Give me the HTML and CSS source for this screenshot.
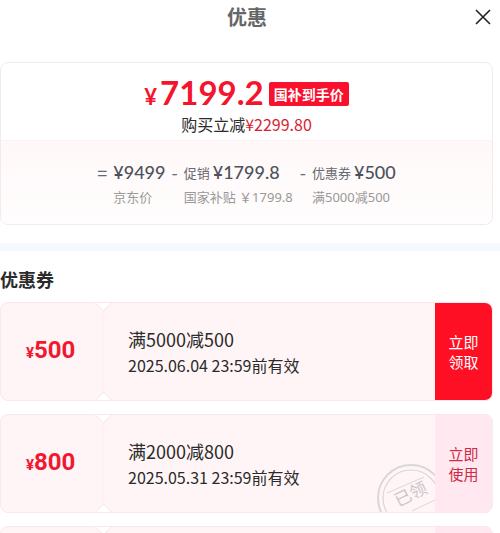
FILE: index.html
```html
<!DOCTYPE html>
<html lang="zh-CN">
<head>
<meta charset="utf-8">
<meta name="viewport" content="width=device-width, initial-scale=1">
<title>优惠</title>
<link rel="stylesheet" href="styles.css">
</head>
<body>
<main class="sheet">
  <header class="head">
    <h1 class="head-title">优惠</h1>
    <button class="close" type="button" aria-label="关闭">
      <svg width="16" height="16" viewBox="0 0 16 16"><path d="M1 1L15 15M15 1L1 15" fill="none" stroke="#222" stroke-width="1.6"/></svg>
    </button>
  </header>

  <section class="summary">
    <div class="final">
      <div class="final-row">
        <span class="final-price"><span class="final-sign">¥</span>7199.2</span>
        <span class="tag">国补到手价</span>
      </div>
      <p class="saving">购买立减<span class="saving-num">¥2299.80</span></p>
    </div>
    <div class="formula">
      <span class="op">=</span>
      <div class="term"><p class="term-top"><b class="num">¥9499</b></p><p class="note">京东价</p></div>
      <span class="op">-</span>
      <div class="term term-promo"><p class="term-top">促销<b class="num">¥1799.8</b></p><p class="note">国家补贴 ￥1799.8</p></div>
      <span class="op">-</span>
      <div class="term"><p class="term-top">优惠券<b class="num">¥500</b></p><p class="note">满5000减500</p></div>
    </div>
  </section>

  <section class="coupons">
    <h2 class="coupons-title">优惠券</h2>
    <article class="coupon">
      <div class="amount"><span class="amount-sign">¥</span>500</div>
      <div class="detail">
        <h3 class="rule">满5000减500</h3>
        <p class="expiry">2025.06.04 23:59前有效</p>
      </div>
      <button class="action" type="button"><span class="action-line">立即</span><span class="action-line">领取</span></button>
    </article>
    <article class="coupon">
      <div class="amount"><span class="amount-sign">¥</span>800</div>
      <div class="detail">
        <h3 class="rule">满2000减800</h3>
        <p class="expiry">2025.05.31 23:59前有效</p>
        <svg class="stamp" width="60" height="50" viewBox="0 0 60 50">
          <g fill="none" stroke="#dad6da">
            <circle cx="36" cy="36" r="33" stroke-width="2"/>
            <circle cx="36" cy="36" r="28" stroke-width="1.2"/>
            <path d="M12 31L49 15M37 49L62 37" stroke-width="1"/>
          </g>
          <text class="stamp-text" x="36" y="38" text-anchor="middle" transform="rotate(-26 36 33)">已领</text>
        </svg>
      </div>
      <button class="action action-use" type="button"><span class="action-line">立即</span><span class="action-line">使用</span></button>
    </article>
    <article class="coupon">
      <div class="amount"></div>
      <div class="detail"></div>
      <div class="action action-use"></div>
    </article>
  </section>
</main>
</body>
</html>
```
FILE: styles.css
```css
* { box-sizing: border-box; }

body {
  margin: 0;
  background: #fff;
  color: #2b2b2b;
  font-family: "Noto Sans CJK SC", sans-serif;
}

h1, h2, h3, p { margin: 0; }

button {
  border: 0;
  padding: 0;
  background: none;
  font-family: inherit;
  cursor: pointer;
}

.sheet {
  height: 100vh;
  overflow: hidden;
}

.head {
  display: grid;
  grid-template-columns: 1fr auto 1fr;
  align-items: center;
  height: 34px;
  padding: 0 9px 0 3px;
}

.head-title {
  grid-column: 2;
  font-size: 20px;
  line-height: 32px;
  color: #666;
}

.close {
  justify-self: end;
  height: 16px;
}

.close svg { display: block; }

.summary {
  margin: 28px 7px 18px 0;
  border: 1px solid #f6e9ec;
  border-radius: 8px;
  overflow: hidden;
}

.final {
  height: 77px;
  padding-top: 11px;
}

.final-row {
  display: flex;
  justify-content: center;
  align-items: center;
  gap: 5px;
  height: 40px;
}

.final-price {
  font: 700 33px/40px Lato, sans-serif;
  color: #f5142d;
}

.final-sign {
  margin-right: 3px;
  font-size: 22px;
}

.tag {
  padding: 0 5px;
  border-radius: 2px;
  background: #fa0f2d;
  color: #fff;
  font-size: 14px;
  font-weight: 700;
  line-height: 24px;
}

.saving {
  font-size: 16px;
  line-height: 20px;
  text-align: center;
}

.saving-num { color: #d81f35; }

.formula {
  display: flex;
  justify-content: center;
  gap: 6px;
  height: 84px;
  padding-top: 18px;
  border-top: 1px solid #fdf1f3;
  background: linear-gradient(#fff8f9, #fffdfd);
  color: #666a70;
}

.op {
  font-size: 18px;
  line-height: 26px;
}

.term-top {
  display: flex;
  align-items: center;
  gap: 3px;
  height: 26px;
  font-size: 13px;
}

.term-promo { width: 110px; }

.num {
  color: #4d525a;
  font: 500 18px/26px Lato, sans-serif;
}

.note {
  color: #999;
  font-family: "Noto Sans", "Noto Sans CJK SC", sans-serif;
  font-size: 13px;
  line-height: 24px;
  white-space: nowrap;
}

.coupons {
  padding-right: 7px;
  border-top: 8px solid #f5f8fd;
}

.coupons-title {
  padding: 15px 0 10px;
  font-size: 18px;
  line-height: 26px;
}

.coupon {
  position: relative;
  display: flex;
  height: 99px;
  margin-bottom: 13px;
  border: 1px solid #fae8eb;
  border-radius: 8px;
  background: #fff5f6;
  overflow: hidden;
}

.coupon::before,
.coupon::after {
  content: "";
  position: absolute;
  left: 96px;
  width: 11px;
  height: 11px;
  border: 1px solid #fae8eb;
  background: #fff;
  transform: rotate(45deg);
}

.coupon::before { top: -7px; }
.coupon::after { bottom: -7px; }

.amount {
  width: 102px;
  padding-left: 25px;
  border-right: 1px solid #fdeff1;
  color: #f2182f;
  font: 700 24px/95px Roboto, sans-serif;
}

.amount-sign { font-size: 15px; }

.detail {
  position: relative;
  flex: 1;
  padding: 23px 0 0 25px;
}

.rule {
  font-size: 18px;
  font-weight: 400;
  line-height: 26px;
}

.expiry {
  font-size: 16px;
  line-height: 26px;
}

.stamp {
  position: absolute;
  right: 0;
  bottom: 0;
}

.stamp-text {
  fill: #c9c6cb;
  font-size: 17px;
}

.action {
  width: 57px;
  background: #ff0f23;
  color: #fff;
  font-size: 15px;
  line-height: 20px;
}

.action-line { display: block; }

.action-use {
  background: #ffe8ef;
  color: #cf2a48;
}
```
